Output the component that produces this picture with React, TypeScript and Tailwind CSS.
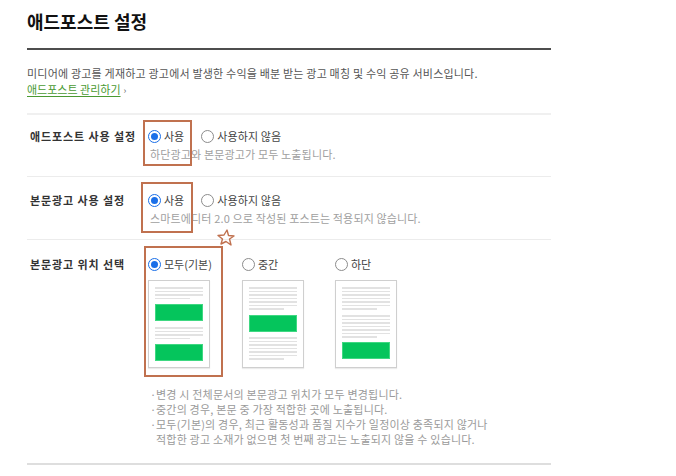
import React from 'react';

function Radio({ checked }: { checked?: boolean }) {
    if (checked) {
        return (
            <span className="w-[13px] h-[13px] rounded-full border-[1.5px] border-[#1a6fe8] bg-white flex items-center justify-center flex-shrink-0">
                <span className="w-[7px] h-[7px] rounded-full bg-[#1a6fe8]" />
            </span>
        );
    }
    return <span className="block w-[13px] h-[13px] rounded-full border border-[#8c8c8c] bg-white flex-shrink-0" />;
}

function Lines({ count }: { count: number }) {
    return (
        <div className="flex flex-col gap-[2px]">
            {Array.from({ length: count }).map((_, i) => (
                <div
                    key={i}
                    className={i === count - 1 ? 'h-[1.5px] w-[35px] bg-[#e2e2e2]' : 'h-[1.5px] w-full bg-[#e2e2e2]'}
                />
            ))}
        </div>
    );
}

function Ad() {
    return <div className="h-[17px] bg-[#05c55c] border border-[#3fd882]" />;
}

function Thumb({ kind }: { kind: 'all' | 'mid' | 'bottom' }) {
    return (
        <div className="w-[62px] h-[88px] border border-[#cfcfcf] bg-white shadow-[0_1px_1px_rgba(0,0,0,0.08)] px-[6px] pt-[6px]">
            {kind === 'all' && (
                <div className="flex flex-col">
                    <Lines count={4} />
                    <div className="mt-[5px]"><Ad /></div>
                    <div className="mt-[6px]"><Lines count={4} /></div>
                    <div className="mt-[5px]"><Ad /></div>
                </div>
            )}
            {kind === 'mid' && (
                <div className="flex flex-col">
                    <Lines count={7} />
                    <div className="mt-[5px]"><Ad /></div>
                    <div className="mt-[5.5px]"><Lines count={7} /></div>
                </div>
            )}
            {kind === 'bottom' && (
                <div className="flex flex-col">
                    <Lines count={7} />
                    <div className="mt-[5.5px]"><Lines count={7} /></div>
                    <div className="mt-[4.5px]"><Ad /></div>
                </div>
            )}
        </div>
    );
}

function SettingRow({ label, hint, className }: { label: string; hint: string; className: string }) {
    return (
        <div className={`flex border-b border-[#ececec] ${className}`}>
            <div className="w-[121px] pl-[3px] h-4 flex items-center text-[11px] tracking-[0.9px] font-bold text-[#333]">{label}</div>
            <div>
                <div className="flex items-center h-4 text-[11px] text-[#444]">
                    <Radio checked />
                    <span className="ml-[3px]">사용</span>
                    <span className="ml-[17px] flex"><Radio /></span>
                    <span className="ml-[3px] tracking-[0.1px]">사용하지 않음</span>
                </div>
                <div className="mt-[2px] h-4 leading-4 pl-[2px] text-[11px] text-[#a0a0a0] tracking-[0.15px]">{hint}</div>
            </div>
        </div>
    );
}

function Option({ label, checked, kind, width }: { label: string; checked?: boolean; kind: 'all' | 'mid' | 'bottom'; width: string }) {
    return (
        <div className={width}>
            <div className="flex items-center h-4 text-[11px] text-[#444]">
                <Radio checked={checked} />
                <span className="ml-[3px]">{label}</span>
            </div>
            <div className="mt-[8px]"><Thumb kind={kind} /></div>
        </div>
    );
}

export default function App() {
    const mark = 'absolute border-2 border-[#c0714f]';
    return (
        <div className="relative w-[676px] h-[476px] overflow-hidden bg-white font-['Noto_Sans_CJK_KR','Noto_Sans',sans-serif]">
            <div className="ml-[27px] w-[524px]">
                <h1 className="h-[48px] pt-[9px] leading-6 text-[18px] font-bold text-[#111]">애드포스트 설정</h1>

                <div className="border-t-2 border-b-2 border-t-[#4d4d4d] border-b-[#f0f0f0] pt-[15px] pb-[14px] text-[11px] leading-4">
                    <p className="text-[#555] tracking-[0.2px]">
                        미디어에 광고를 게재하고 광고에서 발생한 수익을 배분 받는 광고 매칭 및 수익 공유 서비스입니다.
                    </p>
                    <p>
                        <a className="text-[#4a9a32] underline underline-offset-2">애드포스트 관리하기</a>
                        <span className="ml-[3px] text-[9px] text-[#666]">›</span>
                    </p>
                </div>

                <SettingRow label="애드포스트 사용 설정" hint="하단광고와 본문광고가 모두 노출됩니다." className="pt-[13px] pb-[14px]" />
                <SettingRow label="본문광고 사용 설정" hint="스마트에디터 2.0 으로 작성된 포스트는 적용되지 않습니다." className="pt-[15px] pb-[13px]" />

                <div className="flex pt-[16px] pb-[16px] border-b-2 border-[#dedede]">
                    <div className="w-[121px] pl-[3px] h-4 flex items-center text-[11px] tracking-[0.9px] font-bold text-[#333]">본문광고 위치 선택</div>
                    <div>
                        <div className="flex">
                            <Option label="모두(기본)" checked kind="all" width="w-[94px]" />
                            <Option label="중간" kind="mid" width="w-[93px]" />
                            <Option label="하단" kind="bottom" width="w-[70px]" />
                        </div>
                        <ul className="mt-[19px] text-[11px] leading-[15px] text-[#9a9a9a] tracking-[0.2px]">
                            <li className="flex"><span className="w-[8px] pl-[2px] flex-shrink-0">·</span><span>변경 시 전체문서의 본문광고 위치가 모두 변경됩니다.</span></li>
                            <li className="flex"><span className="w-[8px] pl-[2px] flex-shrink-0">·</span><span>중간의 경우, 본문 중 가장 적합한 곳에 노출됩니다.</span></li>
                            <li className="flex">
                                <span className="w-[8px] pl-[2px] flex-shrink-0">·</span>
                                <span>모두(기본)의 경우, 최근 활동성과 품질 지수가 일정이상 충족되지 않거나<br />적합한 광고 소재가 없으면 첫 번째 광고는 노출되지 않을 수 있습니다.</span>
                            </li>
                        </ul>
                    </div>
                </div>
            </div>

            {/* annotation marks */}
            <div className={`${mark} left-[143px] top-[120px] w-[49px] h-[46px]`} />
            <div className={`${mark} left-[141px] top-[182px] w-[52px] h-[51px]`} />
            <div className={`${mark} left-[144px] top-[246px] w-[79px] h-[131px]`} />
            <svg className="absolute left-[217px] top-[229px]" width="18" height="17" viewBox="0 0 18 17">
                <polygon
                    points="10,1 11.5,6.5 17,7 12.5,10 14,16 9,12.5 4,15 5.5,10 1,6.5 7,6"
                    fill="none"
                    stroke="#c0714f"
                    strokeWidth="1.4"
                    strokeLinejoin="round"
                />
            </svg>
        </div>
    );
}
